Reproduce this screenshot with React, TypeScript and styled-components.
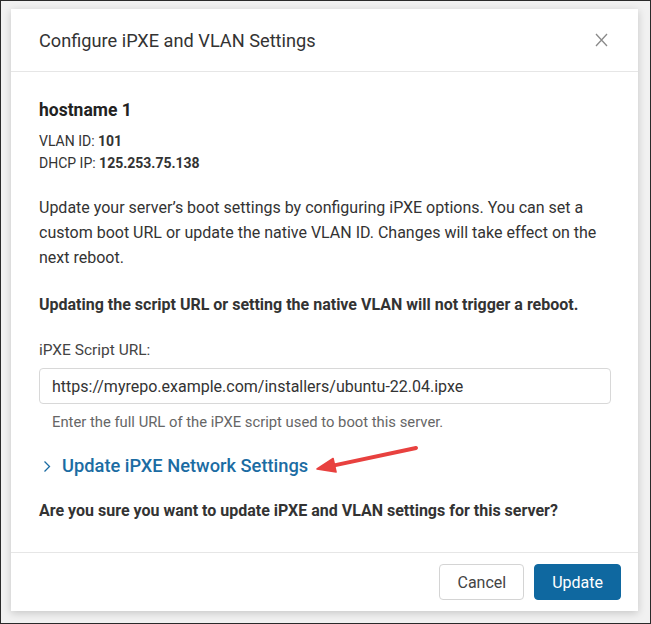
import React, { useState } from "react";
import styled, { createGlobalStyle } from "styled-components";

const GlobalStyle = createGlobalStyle`
  html, body {
    margin: 0;
    padding: 0;
  }
  body {
    font-family: Roboto, "Liberation Sans", Arial, sans-serif;
    color: #333;
    background: #f1f1f1;
  }
  * {
    box-sizing: border-box;
  }
`;

const Frame = styled.div`
  position: relative;
  width: 651px;
  height: 624px;
  border: 1px solid #2a2a2a;
  background: #f1f1f1;
  padding: 8px 0 0 10px;
`;

const Modal = styled.div`
  background: #fff;
  width: 627px;
  height: 602px;
  display: flex;
  flex-direction: column;
  box-shadow: 0 2px 8px rgba(0, 0, 0, 0.18);
`;

const Header = styled.div`
  height: 63px;
  display: flex;
  align-items: center;
  justify-content: space-between;
  padding: 0 30px 0 28px;
  border-bottom: 1px solid #e6e6e6;
`;

const Title = styled.h2`
  margin: 0;
  font-size: 18.2px;
  font-weight: 400;
  color: #333;
`;

const CloseButton = styled.button`
  background: none;
  border: none;
  padding: 0;
  width: 13px;
  height: 14px;
  display: flex;
  cursor: pointer;
`;

const Body = styled.div`
  flex: 1;
  padding: 27px 27px 0 28px;
  display: flex;
  flex-direction: column;
`;

const Hostname = styled.div`
  font-size: 17.5px;
  font-weight: 700;
  line-height: 22px;
  color: #222;
`;

const Meta = styled.div`
  margin-top: 9px;
  font-size: 14px;
  line-height: 22px;
  color: #333;

  b {
    font-weight: 700;
  }
`;

const Paragraph = styled.p<{ $bold?: boolean; $gap: number }>`
  margin: ${(p) => p.$gap}px 0 0;
  font-size: 16px;
  line-height: 25px;
  font-weight: ${(p) => (p.$bold ? 700 : 400)};
  color: #333;
`;

const Label = styled.label`
  margin-top: 22px;
  font-size: 15.5px;
  line-height: 22px;
  color: #444;
`;

const UrlInput = styled.input`
  margin-top: 7px;
  height: 36px;
  width: 100%;
  border: 1px solid #d8d8d8;
  border-radius: 4px;
  padding: 0 12px;
  font-family: inherit;
  font-size: 16px;
  color: #333;
  outline: none;
`;

const Helper = styled.div`
  margin-top: 8px;
  padding-left: 13px;
  font-size: 14.8px;
  line-height: 20px;
  color: #666;
`;

const Toggle = styled.button`
  margin-top: 22px;
  align-self: flex-start;
  display: flex;
  align-items: center;
  gap: 11px;
  background: none;
  border: none;
  padding: 0 0 0 4px;
  font-family: inherit;
  font-size: 18.3px;
  line-height: 24px;
  font-weight: 500;
  color: #1b6ca3;
  cursor: pointer;
`;

const Question = styled.div`
  margin-top: 21px;
  font-size: 16px;
  line-height: 24px;
  font-weight: 700;
  color: #333;
`;

const Footer = styled.div`
  height: 59px;
  border-top: 1px solid #e6e6e6;
  display: flex;
  justify-content: flex-end;
  align-items: center;
  gap: 10px;
  padding: 0 17px 0 0;
`;

const Button = styled.button<{ $primary?: boolean }>`
  height: 36px;
  padding: 0 17px;
  border-radius: 4px;
  font-family: inherit;
  font-size: 16px;
  cursor: pointer;
  border: 1px solid ${(p) => (p.$primary ? "#0f68a0" : "#d4d4d4")};
  background: ${(p) => (p.$primary ? "#0f68a0" : "#fff")};
  color: ${(p) => (p.$primary ? "#fff" : "#444")};
`;

const Annotation = styled.svg`
  position: absolute;
  left: 310px;
  top: 439px;
  pointer-events: none;
`;

export default function App() {
  const [url, setUrl] = useState("https://myrepo.example.com/installers/ubuntu-22.04.ipxe");

  return (
    <>
      <GlobalStyle />
      <Frame>
        <Modal>
          <Header>
            <Title>Configure iPXE and VLAN Settings</Title>
            <CloseButton aria-label="Close">
              <svg width="13" height="14" viewBox="0 0 13 14">
                <path d="M1 1L12 13M12 1L1 13" stroke="#8a8a8a" strokeWidth="1.3" fill="none" />
              </svg>
            </CloseButton>
          </Header>
          <Body>
            <Hostname>hostname 1</Hostname>
            <Meta>
              VLAN ID: <b>101</b>
              <br />
              DHCP IP: <b>125.253.75.138</b>
            </Meta>
            <Paragraph $gap={21}>
              Update your server’s boot settings by configuring iPXE options. You can set a custom
              boot URL or update the native VLAN ID. Changes will take effect on the next reboot.
            </Paragraph>
            <Paragraph $gap={22} $bold>
              Updating the script URL or setting the native VLAN will not trigger a reboot.
            </Paragraph>
            <Label htmlFor="ipxe-url">iPXE Script URL:</Label>
            <UrlInput id="ipxe-url" value={url} onChange={(e) => setUrl(e.target.value)} />
            <Helper>Enter the full URL of the iPXE script used to boot this server.</Helper>
            <Toggle type="button">
              <svg width="8" height="13" viewBox="0 0 8 13">
                <path d="M1.5 1.5L6.5 6.5L1.5 11.5" stroke="#1b6ca3" strokeWidth="1.3" fill="none" />
              </svg>
              Update iPXE Network Settings
            </Toggle>
            <Question>Are you sure you want to update iPXE and VLAN settings for this server?</Question>
          </Body>
          <Footer>
            <Button type="button">Cancel</Button>
            <Button type="button" $primary>
              Update
            </Button>
          </Footer>
        </Modal>
        <Annotation width="112" height="38" viewBox="0 0 112 38">
          <path d="M105 8L22 25.6" stroke="#e8413f" strokeWidth="4" strokeLinecap="round" />
          <path d="M6 29L22.1 18.5L25.1 32.1Z" fill="#e8413f" stroke="#e8413f" strokeWidth="1.5" strokeLinejoin="round" />
        </Annotation>
      </Frame>
    </>
  );
}
